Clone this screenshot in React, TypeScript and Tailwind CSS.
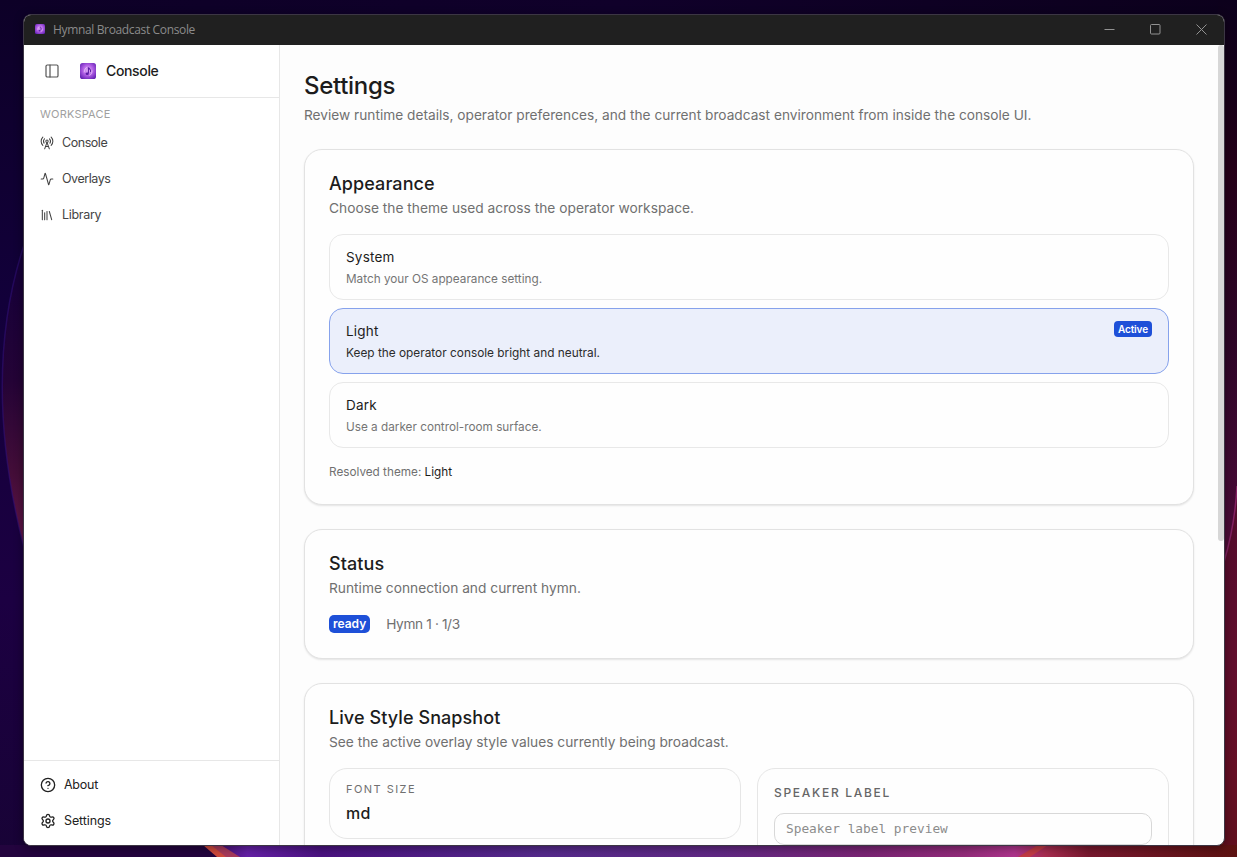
import type { ReactNode } from "react";
import { Activity, CircleQuestionMark, Library, PanelLeft, RadioTower, Settings } from "lucide-react";

function Wallpaper() {
  return (
    <svg className="absolute inset-0" width="1237" height="857" viewBox="0 0 1237 857" aria-hidden="true">
      <defs>
        <linearGradient id="left" x1="0" y1="0" x2="0" y2="1">
          <stop offset="0" stopColor="#0d0027" />
          <stop offset="0.35" stopColor="#12003a" />
          <stop offset="0.7" stopColor="#1c0042" />
          <stop offset="1" stopColor="#180336" />
        </linearGradient>
        <linearGradient id="lens" x1="0" y1="0" x2="0" y2="1">
          <stop offset="0" stopColor="#13003a" />
          <stop offset="0.45" stopColor="#240336" />
          <stop offset="0.75" stopColor="#430d38" />
          <stop offset="1" stopColor="#64164a" />
        </linearGradient>
        <linearGradient id="right" x1="0" y1="0" x2="0" y2="1">
          <stop offset="0" stopColor="#0c001c" />
          <stop offset="0.12" stopColor="#190018" />
          <stop offset="0.2" stopColor="#260019" />
          <stop offset="0.4" stopColor="#2f0628" />
          <stop offset="0.6" stopColor="#480a36" />
          <stop offset="0.78" stopColor="#6a1038" />
          <stop offset="0.9" stopColor="#741224" />
          <stop offset="1" stopColor="#631311" />
        </linearGradient>
        <linearGradient id="bottom" x1="0" y1="0" x2="1" y2="0">
          <stop offset="0" stopColor="#250440" />
          <stop offset="0.16" stopColor="#33064e" />
          <stop offset="0.2" stopColor="#6420a6" />
          <stop offset="0.26" stopColor="#4a1280" />
          <stop offset="0.44" stopColor="#552a8c" />
          <stop offset="0.58" stopColor="#602884" />
          <stop offset="0.7" stopColor="#7a2474" />
          <stop offset="0.78" stopColor="#932b7a" />
          <stop offset="0.82" stopColor="#ae348c" />
          <stop offset="0.845" stopColor="#a82d50" />
          <stop offset="0.88" stopColor="#78182e" />
          <stop offset="1" stopColor="#5c1211" />
        </linearGradient>
        <linearGradient id="top" x1="0" y1="0" x2="1" y2="0">
          <stop offset="0" stopColor="#0d0027" />
          <stop offset="0.5" stopColor="#10002a" />
          <stop offset="1" stopColor="#0c001c" />
        </linearGradient>
      </defs>
      <rect width="1237" height="857" fill="url(#top)" />
      <rect width="30" height="857" fill="url(#left)" />
      <path d="M24 245 C-4 330 -6 430 24 548Z" fill="url(#lens)" />
      <path d="M24 245 C-4 330 -6 430 24 548" fill="none" stroke="#32117a" strokeOpacity="0.55" strokeWidth="1.5" />
      <rect x="1218" width="19" height="857" fill="url(#right)" />
      <path d="M1237 486 Q1235 525 1224 562 V857 H1237Z" fill="#5e0e27" fillOpacity="0.6" />
      <path d="M1237 486 Q1235 525 1224 562" fill="none" stroke="#832161" strokeWidth="1.5" />
      <rect y="845" width="1237" height="12" fill="url(#bottom)" />
      <path d="M0 845 H205 L220 857 H0Z" fill="#23043e" />
      <path d="M205 845 H221 L240 857 H218Z" fill="#a83a5c" />
      <path d="M203 845 H211 L226 857 H217Z" fill="#cf4a3d" />
      <path d="M1030 857 L1048 845 H1038 L1018 857Z" fill="#c23b45" />
    </svg>
  );
}

function AppMark({ size }: { size: number }) {
  return (
    <svg width={size} height={size} viewBox="0 0 16 16" className="shrink-0">
      <defs>
        <radialGradient id={`mark${size}`} cx="0.5" cy="0.45" r="0.65">
          <stop offset="0" stopColor="#e6b4fa" />
          <stop offset="0.5" stopColor="#b05ee4" />
          <stop offset="1" stopColor="#6420b4" />
        </radialGradient>
      </defs>
      <rect width="16" height="16" rx="2.6" fill={`url(#mark${size})`} />
      <path d="M8.4 10.3V4.5c.7 1.7 3.2 1.7 2.1 4.5" fill="none" stroke="#5a1ca4" strokeWidth="1.1" />
      <ellipse cx="7.2" cy="10.7" rx="1.6" ry="1.2" fill="#5a1ca4" />
      <path d="M4.2 9.4c0-2.5 1.2-4.5 2.7-5M11.9 7.2c.4 2.6-.8 4.7-2.7 5.2" fill="none" stroke="#f0d0ff" strokeWidth="0.7" />
    </svg>
  );
}

function TitleBar() {
  return (
    <div className="flex h-[30px] shrink-0 items-center bg-[#202020] pl-[11px]">
      <div className="-mt-0.5 flex">
        <AppMark size={10} />
      </div>
      <span className="ml-2 font-['Open_Sans',sans-serif] text-xs tracking-[-0.35px] text-[#8b8b8b]">
        Hymnal Broadcast Console
      </span>
      <div className="mr-[17px] ml-auto flex items-center gap-[35px] pb-[2px] text-[#929292]">
        <svg width="11" height="11" viewBox="0 0 11 11"><path d="M.5 5.5h10" stroke="currentColor" /></svg>
        <svg width="11" height="11" viewBox="0 0 11 11"><rect x="0.5" y="0.5" width="9.5" height="9.5" rx="1" fill="none" stroke="currentColor" /></svg>
        <svg width="11" height="11" viewBox="0 0 11 11"><path d="m.5.5 10 10m0-10-10 10" stroke="currentColor" /></svg>
      </div>
    </div>
  );
}

function Sidebar() {
  return (
    <aside className="flex w-64 shrink-0 flex-col border-r border-[#e7e7e7] bg-white">
      <div className="flex h-[53px] shrink-0 items-center border-b border-[#e7e7e7] pl-5">
        <PanelLeft size={16} className="text-[#555]" strokeWidth={1.8} />
        <div className="ml-5 flex">
          <AppMark size={16} />
        </div>
        <span className="ml-2.5 text-sm font-medium tracking-[-0.35px] text-[#1c1c1c]">Console</span>
      </div>
      <div className="pt-2 pl-4">
        <div className="text-[11px] leading-[17px] tracking-[0.2px] text-[#a0a0a0]">WORKSPACE</div>
        <nav className="mt-1 flex flex-col gap-1 text-[#444]">
          <a className="flex h-8 items-center gap-2">
            <RadioTower size={14} strokeWidth={1.8} />
            <span className="text-[12.5px] tracking-[-0.45px]">Console</span>
          </a>
          <a className="flex h-8 items-center gap-2">
            <Activity size={14} strokeWidth={1.8} />
            <span className="text-[12.5px] tracking-[-0.45px]">Overlays</span>
          </a>
          <a className="flex h-8 items-center gap-2">
            <Library size={14} strokeWidth={1.8} />
            <span className="text-[12.5px] tracking-[-0.3px]">Library</span>
          </a>
        </nav>
      </div>
      <div className="mt-auto flex h-[85px] flex-col gap-1 border-t border-[#e7e7e7] pt-2 pl-4 text-[#222]">
        <a className="flex h-8 items-center gap-2">
          <CircleQuestionMark size={16} />
          <span className="text-[12.5px] tracking-[-0.25px]">About</span>
        </a>
        <a className="flex h-8 items-center gap-2">
          <Settings size={16} />
          <span className="text-[12.5px] tracking-[-0.1px]">Settings</span>
        </a>
      </div>
    </aside>
  );
}

function Card({ title, description, children }: { title: string; description: string; children: ReactNode }) {
  return (
    <section className="shrink-0 rounded-[18px] border border-[#e2e2e2] bg-[#fefefe] p-6 shadow-[0_1px_2px_rgba(0,0,0,0.1)]">
      <h2 className="text-lg leading-[19px] font-medium tracking-[0.08px] text-[#1c1c1c]">{title}</h2>
      <p className="mt-[5px] text-[13.75px] leading-5 text-[#707070]">{description}</p>
      <div className="mt-4">{children}</div>
    </section>
  );
}

function ThemeOption({ name, hint, active = false }: { name: string; hint: string; active?: boolean }) {
  return (
    <div
      className={
        active
          ? "flex h-[66px] justify-between rounded-[14px] border border-[#86a2ec] bg-[#ebeffb] px-4 py-3"
          : "flex h-[66px] justify-between rounded-[14px] border border-[#e8e8e8] bg-[#fefefe] px-4 py-3"
      }
    >
      <div>
        <div className="text-[13.5px] leading-5 tracking-[0.2px] text-[#1c1c1c]">{name}</div>
        <div className={active ? "mt-1 text-[11.85px] leading-4 text-[#2c2c2c]" : "mt-1 text-[11.75px] leading-4 text-[#757575]"}>
          {hint}
        </div>
      </div>
      {active && (
        <span className="flex h-4 items-center rounded-[4px] bg-[#1e50d8] px-1 text-[10px] font-semibold tracking-[-0.1px] text-white">
          Active
        </span>
      )}
    </div>
  );
}

export default function App() {
  return (
    <div className="relative h-[857px] w-[1237px] overflow-hidden pt-[14px] pl-[23px] font-['Inter',sans-serif]">
      <Wallpaper />
      <div className="relative flex h-[832px] w-[1202px] flex-col overflow-hidden rounded-lg border border-[#3c3644] bg-[#fdfdfd] shadow-[0_2px_10px_rgba(0,0,0,0.4)]">
        <TitleBar />
        <div className="flex min-h-0 flex-1">
          <Sidebar />
          <main className="flex min-w-0 flex-1 flex-col gap-6 overflow-hidden px-6 pt-6">
            <header className="shrink-0">
              <h1 className="text-2xl leading-[33px] font-medium tracking-[-0.3px] text-[#1c1c1c]">Settings</h1>
              <p className="mt-[3px] text-[13.7px] leading-5 text-[#707070]">
                Review runtime details, operator preferences, and the current broadcast environment from inside the console UI.
              </p>
            </header>

            <Card title="Appearance" description="Choose the theme used across the operator workspace.">
              <div className="flex flex-col gap-2">
                <ThemeOption name="System" hint="Match your OS appearance setting." />
                <ThemeOption name="Light" hint="Keep the operator console bright and neutral." active />
                <ThemeOption name="Dark" hint="Use a darker control-room surface." />
              </div>
              <p className="mt-4 text-[11.75px] leading-4 text-[#707070]">
                Resolved theme: <span className="text-[#1c1c1c]">Light</span>
              </p>
            </Card>

            <Card title="Status" description="Runtime connection and current hymn.">
              <div className="flex h-5 items-center gap-4">
                <span className="flex h-[18px] items-center rounded-[5px] bg-[#1e50d8] px-1 text-xs font-semibold text-white">
                  ready
                </span>
                <span className="text-[13.7px] tracking-[-0.38px] text-[#707070]">Hymn 1 · 1/3</span>
              </div>
            </Card>

            <Card title="Live Style Snapshot" description="See the active overlay style values currently being broadcast.">
              <div className="grid grid-cols-2 items-start gap-4">
                <div className="h-[71px] rounded-[18px] border border-[#e6e6e6] px-4 py-3">
                  <div className="text-[11px] leading-4 tracking-[1.45px] text-[#707070]">FONT SIZE</div>
                  <div className="mt-1 text-base leading-6 font-medium tracking-[0.3px] text-[#1c1c1c]">md</div>
                </div>
                <div className="h-40 rounded-[18px] border border-[#e6e6e6] p-4">
                  <div className="text-xs leading-4 font-medium tracking-[1.7px] text-[#666]">SPEAKER LABEL</div>
                  <div className="mt-3 flex h-8 items-center rounded-[10px] border border-[#d8d8d8] px-[11px] pb-px font-['DejaVu_Sans_Mono',monospace] text-[12.8px] text-[#8c8c8c]">
                    Speaker label preview
                  </div>
                </div>
              </div>
            </Card>
          </main>
          <div className="w-1.5 shrink-0">
            <div className="h-[496px] rounded-full bg-[#d7d7d7]" />
          </div>
        </div>
      </div>
    </div>
  );
}
